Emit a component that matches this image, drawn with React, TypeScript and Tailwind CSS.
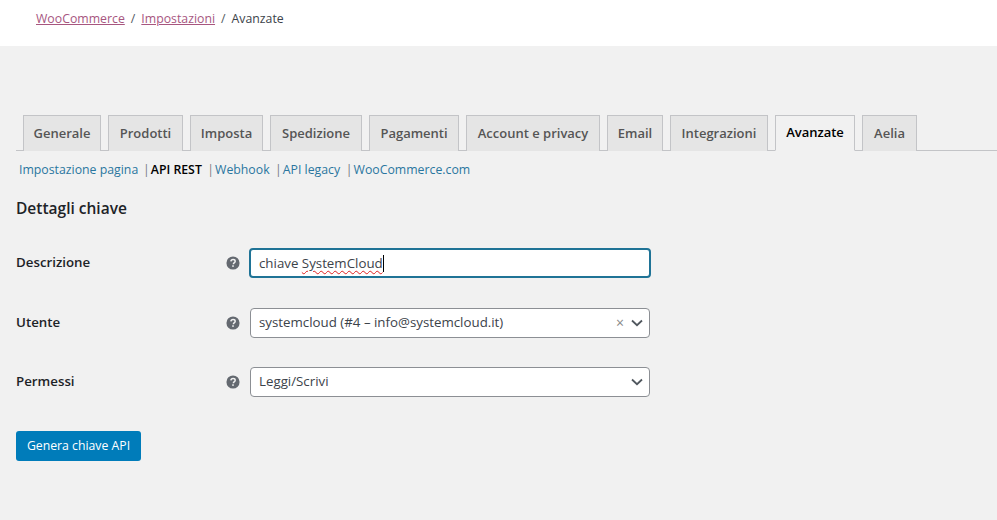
import React from "react";

const tabs = [
  { label: "Generale", w: "w-[78px]", mr: "mr-[7px]" },
  { label: "Prodotti", w: "w-[75px]", mr: "mr-[7px]" },
  { label: "Imposta", w: "w-[73px]", mr: "mr-[7px]" },
  { label: "Spedizione", w: "w-[92px]", mr: "mr-[7px]" },
  { label: "Pagamenti", w: "w-[90px]", mr: "mr-[7px]" },
  { label: "Account e privacy", w: "w-[134px]", mr: "mr-[7px]" },
  { label: "Email", w: "w-[56px]", mr: "mr-[7px]" },
  { label: "Integrazioni", w: "w-[98px]", mr: "mr-[7px]" },
  { label: "Avanzate", w: "w-[80px]", mr: "mr-[7px]", active: true },
  { label: "Aelia", w: "w-[55px]", mr: "" },
];

function Help() {
  return (
    <svg viewBox="0 0 16 16" className="w-[14px] h-[14px] shrink-0">
      <circle cx="8" cy="8" r="7.5" fill="#646970" />
      <path d="M5.6 6.2C5.7 4.8 6.7 4 8.1 4c1.4 0 2.4.8 2.4 2 0 1-.6 1.5-1.2 1.9-.6.4-.8.7-.8 1.3v.3" fill="none" stroke="#f1f1f1" strokeWidth="1.7" />
      <rect x="7.1" y="10.6" width="1.8" height="1.8" fill="#f1f1f1" />
    </svg>
  );
}

function Chevron() {
  return (
    <svg viewBox="0 0 12 8" className="w-[12px] h-[8px]">
      <path d="M1 1.5 6 6.2 11 1.5" fill="none" stroke="#50575e" strokeWidth="1.8" />
    </svg>
  );
}

function Row({ label, mb, children }: { label: string; mb: string; children: React.ReactNode }) {
  return (
    <div className={`flex items-center ${mb}`}>
      <div className="w-[210px] font-semibold text-[#1d2327]">{label}</div>
      <Help />
      <div className="ml-[10px]">{children}</div>
    </div>
  );
}

export default function App() {
  return (
    <div className="w-[997px] h-[520px] overflow-hidden bg-[#f1f1f1] text-[13.3px] text-[#3c434a] font-['Open_Sans','Liberation_Sans',sans-serif]">
      <div className="h-[46px] bg-white pl-[36px] pt-[10px] leading-[18px] text-[12.3px]">
        <a className="text-[#a7567f] underline">WooCommerce</a>
        <span className="mx-[6px] text-[#50575e]">/</span>
        <a className="text-[#a7567f] underline">Impostazioni</a>
        <span className="mx-[6px] text-[#50575e]">/</span>
        <span className="text-[#3c434a]">Avanzate</span>
      </div>

      <div className="pl-[16px] pt-[69px]">
        <div className="flex h-[36px] pl-[7px] border-b border-[#c3c4c7]">
          {tabs.map((t) => (
            <div
              key={t.label}
              className={`${t.w} ${t.mr} h-[36px] border border-[#c3c4c7] flex items-center justify-center text-[13px] font-semibold ${
                t.active ? "bg-[#f1f1f1] border-b-[#f1f1f1] text-black" : "bg-[#e5e5e5] h-[35px] border-b-0 text-[#555555]"
              }`}
            >
              {t.label}
            </div>
          ))}
        </div>

        <div className="flex items-center h-[18px] mt-[10px] pl-[3px] text-[12.3px]">
          <a className="w-[124px] text-[#2a769f]">Impostazione pagina</a>
          <span className="text-[#787c82] mr-[1px]">|</span>
          <span className="w-[56.5px] font-semibold text-black text-[12.3px]">API REST</span>
          <span className="text-[#787c82] mr-[1px]">|</span>
          <a className="w-[60px] text-[#2a769f]">Webhook</a>
          <span className="text-[#787c82] mr-[1px]">|</span>
          <a className="w-[63px] text-[#2a769f]">API legacy</a>
          <span className="text-[#787c82] mr-[1px]">|</span>
          <a className="text-[#2a769f]">WooCommerce.com</a>
        </div>

        <h2 className="mt-[19px] text-[15.5px] leading-[20px] font-semibold text-[#1d2327]">Dettagli chiave</h2>

        <div className="mt-[30px]">
          <Row label="Descrizione" mb="mb-[30px]">
            <div className="relative w-[402px] h-[30px] -ml-[1px] bg-white border-2 border-[#1f7396] rounded-[4px] flex items-center pl-[8px]">
              <span className="leading-[18px]">
                chiave <span className="underline decoration-wavy decoration-[#e02020] decoration-1 underline-offset-2">SystemCloud</span>
              </span>
              <span className="w-[1px] h-[17px] bg-black" />
            </div>
          </Row>
          <Row label="Utente" mb="mb-[29px]">
            <div className="w-[400px] h-[30px] bg-white border border-[#8c8f94] rounded-[4px] flex items-center pl-[8px] pr-[6px]">
              <span className="flex-1">systemcloud (#4 – info@systemcloud.it)</span>
              <span className="text-[14px] leading-none text-[#888888] mr-[7px]">×</span>
              <Chevron />
            </div>
          </Row>
          <Row label="Permessi" mb="mb-[34px]">
            <div className="w-[400px] h-[30px] bg-white border border-[#8c8f94] rounded-[4px] flex items-center pl-[8px] pr-[6px]">
              <span className="flex-1">Leggi/Scrivi</span>
              <Chevron />
            </div>
          </Row>
        </div>

        <button className="w-[125px] h-[30px] rounded-[3px] bg-[#007cba] text-white text-[12.25px]">Genera chiave API</button>
      </div>
    </div>
  );
}
